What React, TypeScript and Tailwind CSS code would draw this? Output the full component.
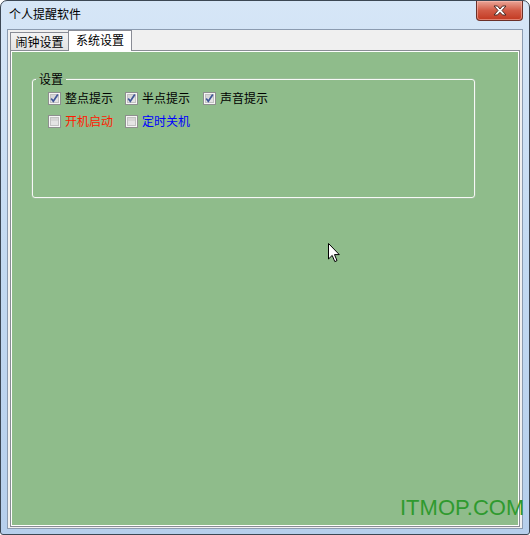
import React from "react";

const cjk = "font-['Microsoft_YaHei','Noto_Sans_CJK_SC',sans-serif]";

function CheckBox({ checked }: { checked?: boolean }) {
  return (
    <svg width="13" height="13" viewBox="0 0 13 13" className="shrink-0">
      <rect x="0.5" y="0.5" width="12" height="12" fill="#f6f6f6" stroke="#8e8f8f" />
      <rect x="2.5" y="2.5" width="8" height="8" fill="#e4e4e4" stroke="#c2c2c2" />
      <rect x="3" y="3" width="7" height="3" fill="#d6d6d6" />
      {checked && (
        <path d="M3.2 6.4 L5.3 9.2 L9.8 2.6" stroke="#3f5796" strokeWidth="1.7" fill="none" />
      )}
    </svg>
  );
}

function Option({ label, checked, color }: { label: string; checked?: boolean; color?: string }) {
  return (
    <div className="flex items-center gap-[4px] h-[16px]">
      <CheckBox checked={checked} />
      <span className={`text-[12px] leading-[14px] whitespace-nowrap ${color ?? "text-black"}`}>{label}</span>
    </div>
  );
}

function CloseButton() {
  return (
    <div className="absolute right-[6px] top-0 w-[47px] h-[20px] rounded-b-[4px] border border-t-0 border-[#6b3028] bg-gradient-to-b from-[#e9a597] via-[#d25a45] to-[#c2381f] flex items-center justify-center shadow-[inset_0_0_0_1px_rgba(255,200,190,0.5)]">
      <svg width="14" height="11" viewBox="0 0 14 11">
        <path
          d="M1 1 H4.5 L7 4 L9.5 1 H13 L9 5.5 L13 10 H9.5 L7 7.3 L4.5 10 H1 L5 5.5 Z"
          fill="#ffffff"
          stroke="#4a2a24"
          strokeWidth="1"
          strokeLinejoin="round"
        />
      </svg>
    </div>
  );
}

function Cursor() {
  return (
    <svg width="12" height="20" viewBox="0 0 12 20" className="absolute left-[328px] top-[243px]">
      <path
        d="M0.5 0.5 V16 L4.2 12.4 L6.8 18.6 L9 17.6 L6.5 11.6 H11.3 Z"
        fill="#ffffff"
        stroke="#000000"
        strokeWidth="1"
        strokeLinejoin="round"
      />
    </svg>
  );
}

export default function App() {
  return (
    <div className={`relative w-[530px] h-[535px] bg-white ${cjk}`}>
      <div className="w-full h-full flex flex-col rounded-t-[7px] rounded-b-[3px] border border-[#3c4754] bg-gradient-to-b from-[#d6e6f7] via-[#c2d9f1] to-[#b6cfec]">
        {/* title bar */}
        <div className="relative h-[28px] flex items-center pl-[8px] pb-[2px]">
          <span className="text-[12px] text-black">个人提醒软件</span>
          <CloseButton />
        </div>

        {/* client area */}
        <div className="flex-1 mx-[6px] mb-[5px] border border-[#8b9bb0] bg-[#f0f0f0] px-[2px] pb-[1px] flex flex-col">
          <div className="h-[20px] flex items-end">
            <div className="h-[18px] w-[59px] border border-b-0 border-[#898c95] bg-gradient-to-b from-[#f3f3f3] to-[#e3e3e3] flex items-center justify-center text-[12px] text-black">
              闹钟设置
            </div>
            <div className="relative z-10 -ml-px -mb-px h-[21px] w-[64px] border border-b-0 border-[#898c95] bg-white flex items-center justify-center pb-[2px] text-[12px] text-black">
              系统设置
            </div>
          </div>

          <div className="flex-1 border border-[#898c95] bg-white p-px">
            <div className="h-full bg-[#8fbc8b] pt-[20px] pl-[20px]">
              <fieldset className="w-[443px] h-[126px] border border-[#f7f9f7] rounded-[3px] shadow-[0_0_0_0.5px_#a9bea7]">
                <legend className="ml-[3px] px-[3px] text-[12px] leading-[14px] text-black">设置</legend>
                <div className="mt-[4px] pl-[15px] grid grid-cols-[77px_78px_auto] gap-y-[7px]">
                  <Option label="整点提示" checked />
                  <Option label="半点提示" checked />
                  <Option label="声音提示" checked />
                  <Option label="开机启动" color="text-[#ff1a00]" />
                  <Option label="定时关机" color="text-[#0000ff]" />
                </div>
              </fieldset>
            </div>
          </div>
        </div>
      </div>

      <Cursor />

      <div className="absolute left-[400px] top-[497px] text-[22px] leading-[22px] font-['Liberation_Sans',Arial,sans-serif] text-[#2f9a2f] whitespace-nowrap">
        ITMOP.COM
      </div>
    </div>
  );
}
